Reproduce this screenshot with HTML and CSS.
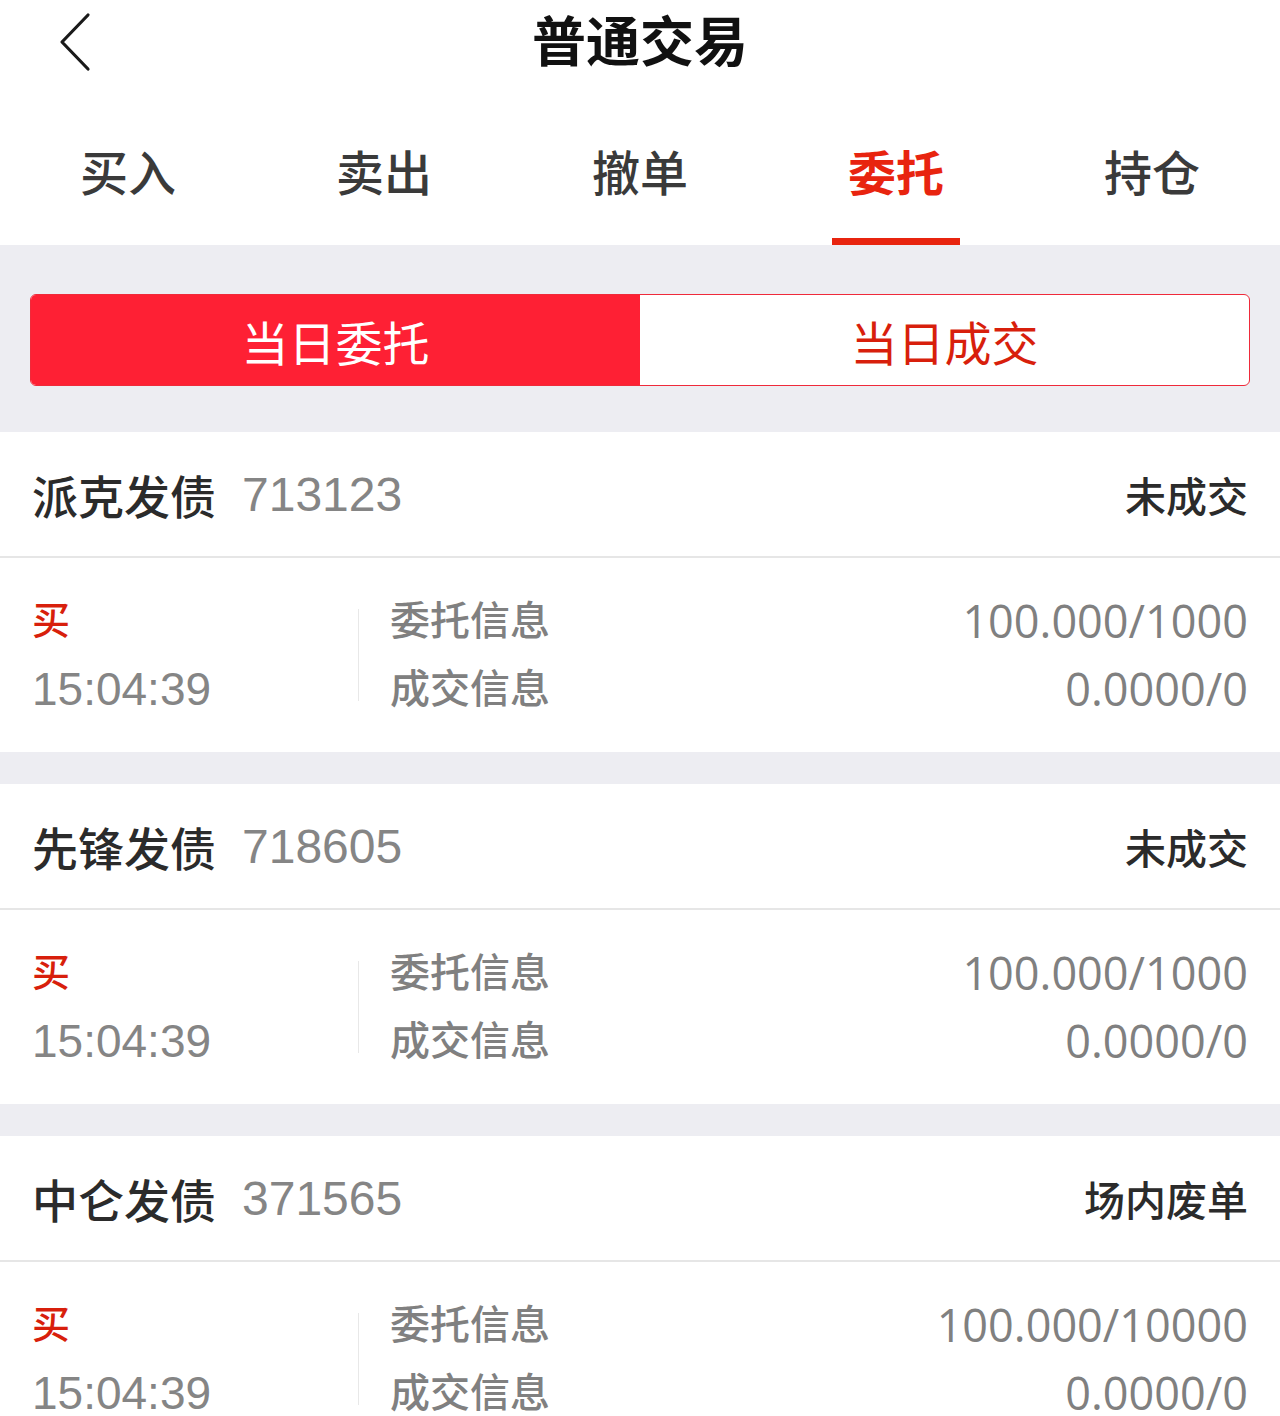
FILE: index.html
```html
<!DOCTYPE html>
<html lang="zh-CN">
<head>
<meta charset="utf-8">
<title>普通交易</title>
<link rel="stylesheet" href="styles.css">
</head>
<body>
<div class="page">
  <header class="nav">
    <div class="back">
      <svg width="40" height="60" viewBox="0 0 40 60"><polyline points="30,3 4,30 30,57" fill="none" stroke="#1a1a1a" stroke-width="3.2" stroke-linecap="round" stroke-linejoin="round"/></svg>
    </div>
    <h1 class="title">普通交易</h1>
  </header>
  <nav class="tabs">
    <div class="tab"><span class="tab-text">买入</span><span class="bar"></span></div>
    <div class="tab"><span class="tab-text">卖出</span><span class="bar"></span></div>
    <div class="tab"><span class="tab-text">撤单</span><span class="bar"></span></div>
    <div class="tab active"><span class="tab-text">委托</span><span class="bar"></span></div>
    <div class="tab"><span class="tab-text">持仓</span><span class="bar"></span></div>
  </nav>
  <section class="seg-wrap">
    <div class="seg">
      <div class="seg-item on">当日委托</div>
      <div class="seg-item">当日成交</div>
    </div>
  </section>

  <div class="card">
    <div class="card-head">
      <div class="name">派克发债<span class="code">713123</span></div>
      <div class="status">未成交</div>
    </div>
    <div class="card-body">
      <div class="left"><div class="side">买</div><div class="time">15:04:39</div></div>
      <div class="sep"></div>
      <div class="labels"><div class="lbl">委托信息</div><div class="lbl">成交信息</div></div>
      <div class="vals"><div class="val">100.000/1000</div><div class="val">0.0000/0</div></div>
    </div>
  </div>

  <div class="card">
    <div class="card-head">
      <div class="name">先锋发债<span class="code">718605</span></div>
      <div class="status">未成交</div>
    </div>
    <div class="card-body">
      <div class="left"><div class="side">买</div><div class="time">15:04:39</div></div>
      <div class="sep"></div>
      <div class="labels"><div class="lbl">委托信息</div><div class="lbl">成交信息</div></div>
      <div class="vals"><div class="val">100.000/1000</div><div class="val">0.0000/0</div></div>
    </div>
  </div>

  <div class="card">
    <div class="card-head">
      <div class="name">中仑发债<span class="code">371565</span></div>
      <div class="status">场内废单</div>
    </div>
    <div class="card-body">
      <div class="left"><div class="side">买</div><div class="time">15:04:39</div></div>
      <div class="sep"></div>
      <div class="labels"><div class="lbl">委托信息</div><div class="lbl">成交信息</div></div>
      <div class="vals"><div class="val">100.000/10000</div><div class="val">0.0000/0</div></div>
    </div>
  </div>
</div>
</body>
</html>
```
FILE: styles.css
```css
* { box-sizing: border-box; }
html, body { margin: 0; padding: 0; background: #ededf2; }
body {
  font-family: "Liberation Sans", "Noto Sans CJK SC", sans-serif;
  color: #333;
  height: 1416px;
  overflow: hidden;
}
.page { width: 1280px; }

.nav {
  height: 86px;
  background: #fff;
  display: flex;
  align-items: center;
  justify-content: center;
  position: relative;
}
.back {
  position: absolute;
  left: 58px;
  top: 12px;
  width: 40px;
  height: 60px;
}
.back svg { display: block; }
.title {
  margin: 0;
  font-size: 54px;
  font-weight: 700;
  color: #111;
  line-height: 60px;
}

.tabs {
  height: 159px;
  background: #fff;
  display: flex;
}
.tab {
  flex: 1;
  display: flex;
  flex-direction: column;
  align-items: center;
  padding-top: 61px;
}
.tab-text {
  font-size: 48px;
  line-height: 56px;
  color: #3a3a3a;
  font-weight: 500;
}
.bar {
  margin-top: auto;
  width: 128px;
  height: 7px;
  background: transparent;
}
.tab.active .tab-text { color: #e8240f; font-weight: 700; }
.tab.active .bar { background: #e8240f; }

.seg-wrap {
  padding: 49px 30px 46px;
  background: #ededf2;
}
.seg {
  display: flex;
  height: 92px;
  border: 1px solid #ef2a3a;
  border-radius: 6px;
  overflow: hidden;
  background: #fff;
}
.seg-item {
  flex: 1;
  display: flex;
  align-items: center;
  justify-content: center;
  font-size: 47px;
  color: #d81f0c;
}
.seg-item.on { background: #fe2034; color: #fff; }

.card {
  background: #fff;
  margin-bottom: 32px;
}
.card-head {
  height: 126px;
  display: flex;
  align-items: center;
  justify-content: space-between;
  padding: 0 32px;
  border-bottom: 2px solid #e6e6e6;
}
.name {
  font-size: 46px;
  color: #2b2b2b;
  font-weight: 500;
  display: flex;
  align-items: center;
}
.code {
  margin-left: 26px;
  font-size: 48px;
  font-weight: 400;
  color: #858585;
}
.status {
  font-size: 41px;
  color: #2b2b2b;
  font-weight: 500;
}
.card-body {
  height: 194px;
  display: flex;
  align-items: center;
  padding: 0 32px;
}
.left { width: 326px; }
.side {
  font-size: 38px;
  line-height: 68px;
  color: #d81f0c;
  font-weight: 500;
}
.time {
  font-size: 46px;
  line-height: 68px;
  color: #858585;
}
.sep {
  width: 1px;
  height: 92px;
  background: #e8e8e8;
}
.labels { margin-left: 31px; }
.lbl {
  font-size: 40px;
  line-height: 68px;
  color: #808080;
  font-weight: 500;
}
.vals {
  margin-left: auto;
  text-align: right;
}
.val {
  font-family: "Open Sans", "Noto Sans", sans-serif;
  font-size: 45px;
  line-height: 68px;
  color: #808080;
}
```
